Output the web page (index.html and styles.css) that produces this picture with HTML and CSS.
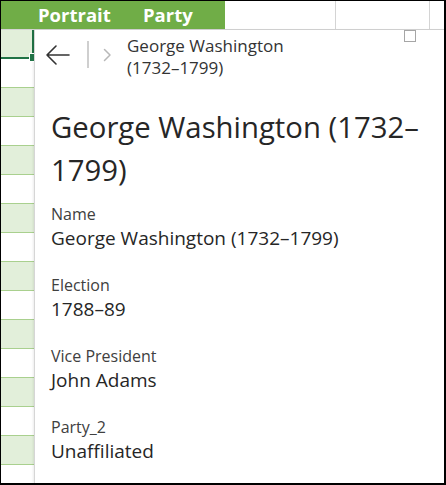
FILE: index.html
```html
<!DOCTYPE html>
<html lang="en">
<head>
<meta charset="utf-8">
<title>Card</title>
<link rel="stylesheet" href="styles.css">
</head>
<body>
<div class="frame">
  <div class="header">
    <div class="h-green">
      <span class="h-first"></span>
      <span class="h-label h-portrait">Portrait</span>
      <span class="h-label h-party">Party</span>
    </div>
    <div class="h-cell h-c1"></div>
    <div class="h-cell h-c2"></div>
    <div class="h-cell h-c3"></div>
  </div>
  <div class="sheet">
    <div class="rows">
      <div class="row alt selected"><span class="handle"></span></div>
      <div class="row"></div>
      <div class="row alt"></div>
      <div class="row"></div>
      <div class="row alt"></div>
      <div class="row"></div>
      <div class="row alt"></div>
      <div class="row"></div>
      <div class="row alt"></div>
      <div class="row"></div>
      <div class="row alt"></div>
      <div class="row"></div>
      <div class="row alt"></div>
      <div class="row"></div>
      <div class="row alt"></div>
      <div class="row"></div>
    </div>
    <aside class="pane">
      <span class="popout"></span>
      <nav class="nav">
        <svg class="back" width="26" height="22" viewBox="0 0 26 22" aria-hidden="true">
          <path d="M24 11 H2 M11 2 L2 11 L11 20" fill="none" stroke="#333" stroke-width="1.6" stroke-linecap="round" stroke-linejoin="round"/>
        </svg>
        <span class="divider"></span>
        <svg class="chev" width="9" height="14" viewBox="0 0 9 14" aria-hidden="true">
          <path d="M1.5 1.5 L7 7 L1.5 12.5" fill="none" stroke="#b8b8b8" stroke-width="1.5" stroke-linecap="round" stroke-linejoin="round"/>
        </svg>
        <div class="nav-title">George Washington<br>(1732–1799)</div>
      </nav>
      <div class="content">
        <h1 class="title">George Washington (1732–1799)</h1>
        <div class="field">
          <div class="label">Name</div>
          <div class="value">George Washington (1732–1799)</div>
        </div>
        <div class="field">
          <div class="label">Election</div>
          <div class="value">1788–89</div>
        </div>
        <div class="field">
          <div class="label">Vice President</div>
          <div class="value">John Adams</div>
        </div>
        <div class="field">
          <div class="label">Party_2</div>
          <div class="value">Unaffiliated</div>
        </div>
      </div>
    </aside>
  </div>
</div>
</body>
</html>
```

FILE: styles.css
```css
html, body {
  margin: 0;
  padding: 0;
  background: #fff;
}

.frame {
  box-sizing: border-box;
  width: 446px;
  height: 485px;
  border-style: solid;
  border-color: #000;
  border-width: 1px 2px 2px 1px;
  display: flex;
  flex-direction: column;
  overflow: hidden;
  font-family: "Open Sans", "Noto Sans", sans-serif;
  color: #262626;
}

/* header */
.header {
  display: flex;
  height: 28px;
  border-bottom: 1px solid #d4d4d4;
  flex: none;
}

.h-green {
  width: 224px;
  background: #70ad47;
  display: flex;
  align-items: center;
  color: #fff;
  font-weight: 700;
  font-size: 18.5px;
  line-height: 28px;
}

.h-first {
  width: 37px;
}

.h-portrait {
  width: 105px;
}

.h-cell {
  border-right: 1px solid #d4d4d4;
  background: #fff;
}

.h-c1 { width: 110px; }
.h-c2 { width: 93px; }
.h-c3 { flex: 1; border-right: none; }

/* sheet */
.sheet {
  flex: 1;
  display: flex;
  min-height: 0;
}

.rows {
  width: 33px;
  flex: none;
  display: flex;
  flex-direction: column;
  overflow: hidden;
  position: relative;
}

.row {
  height: 28px;
  flex: none;
  border-bottom: 1px solid #a9d08e;
  background: #fff;
}

.row.alt {
  background: #e2efda;
}

.row.selected {
  box-sizing: border-box;
  height: 29px;
  border-bottom: 2px solid #217346;
  border-right: 2px solid #217346;
  position: relative;
}

.handle {
  position: absolute;
  right: -4px;
  bottom: -5px;
  width: 6px;
  height: 7px;
  background: #217346;
  border: 1px solid #fff;
  border-right: none;
  z-index: 3;
}

/* pane */
.pane {
  flex: 1;
  position: relative;
  background: #fff;
  border-left: 1px solid #d6d6d6;
  box-shadow: -1px 0 2px rgba(0, 0, 0, 0.08);
  display: flex;
  flex-direction: column;
  z-index: 2;
}

.popout {
  position: absolute;
  top: 0;
  right: 28px;
  width: 10px;
  height: 10px;
  border: 1px solid #a6a6a6;
}

.nav {
  height: 56px;
  display: flex;
  align-items: center;
  padding-left: 10px;
}

.back {
  display: block;
}

.divider {
  width: 2px;
  height: 27px;
  background: #cfcfcf;
  margin-left: 16px;
}

.chev {
  display: block;
  margin-left: 14px;
}

.nav-title {
  margin-left: 15px;
  padding-top: 5px;
  font-size: 17px;
  line-height: 22px;
  color: #333;
}

.content {
  padding: 27px 16px 0 16px;
}

.title {
  margin: 0 0 12px 0;
  font-size: 29.3px;
  line-height: 43px;
  font-weight: 400;
  color: #262626;
}

.field {
  margin-bottom: 24px;
}

.label {
  font-size: 16px;
  line-height: 20px;
  color: #404040;
}

.value {
  margin-top: 1px;
  font-size: 19px;
  line-height: 26px;
  color: #262626;
}
```
